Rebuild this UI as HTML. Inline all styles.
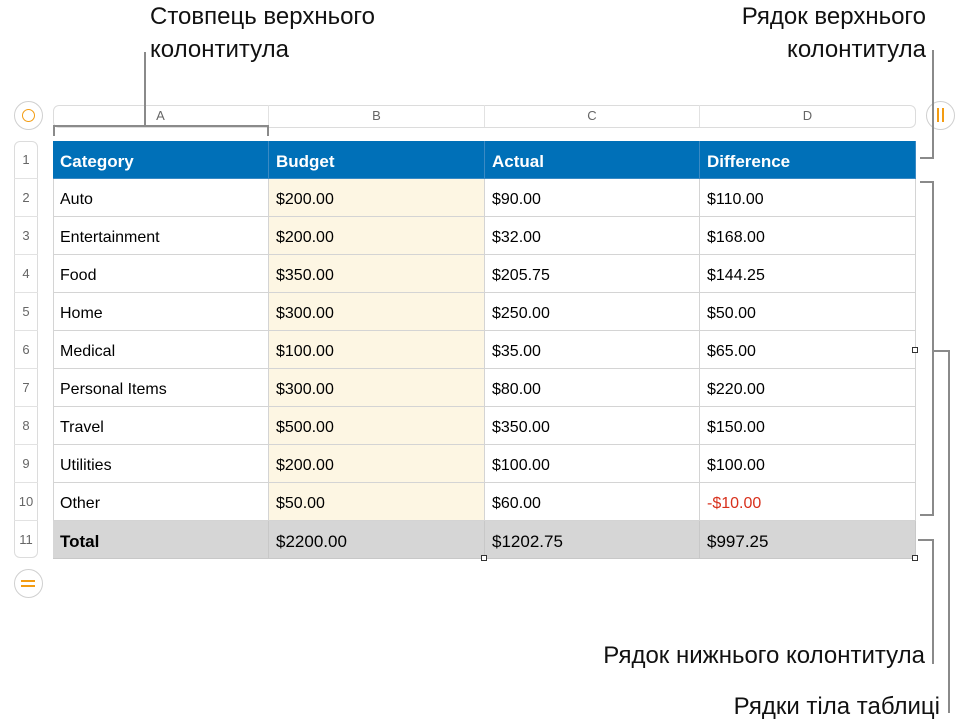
<!DOCTYPE html>
<html><head><meta charset="utf-8"><style>
*{margin:0;padding:0;box-sizing:border-box}
body{width:968px;height:726px;background:#fff;position:relative;overflow:hidden;font-family:"Liberation Sans",Arial,sans-serif;color:#000}
.a{position:absolute}
.lbl{position:absolute;font-size:24px;line-height:24px;color:#111;white-space:nowrap}
.ln{position:absolute;background:#8a8a8a}
.cell{position:absolute;height:38px;line-height:41px;font-size:16px;padding-left:7px;border-right:1px solid #d4d4d4;border-bottom:1px solid #d4d4d4;white-space:nowrap}
.rn{position:absolute;left:14px;width:24px;height:38px;line-height:38px;text-align:center;font-size:13px;color:#666;border-bottom:1px solid #e2e2e2}
.ch{position:absolute;top:105px;height:22px;line-height:22px;text-align:center;font-size:13px;color:#666;border-right:1px solid #e2e2e2}
.h{position:absolute;width:6px;height:6px;border:1px solid #333;background:#fff}
</style></head><body>
<div class="lbl" style="left:150px;top:5px">Стовпець верхнього</div>
<div class="lbl" style="left:150px;top:38px">колонтитула</div>
<div class="lbl" style="right:42px;top:5px">Рядок верхнього</div>
<div class="lbl" style="right:42px;top:38px">колонтитула</div>
<div class="lbl" style="right:43px;top:644px">Рядок нижнього колонтитула</div>
<div class="lbl" style="right:28px;top:695px">Рядки тіла таблиці</div>

<div class="a" style="left:53px;top:105px;width:863px;height:23px;border:1px solid #dcdcdc;border-radius:6px"></div>
<div class="ch" style="left:53px;width:216px">A</div>
<div class="ch" style="left:269px;width:216px">B</div>
<div class="ch" style="left:485px;width:215px">C</div>
<div class="ch" style="left:700px;width:215px;border-right:none">D</div>

<div class="a" style="left:14px;top:101px;width:29px;height:29px;border:1px solid #d0d0d0;border-radius:50%"></div>
<div class="a" style="left:22px;top:109px;width:13px;height:13px;border:1.5px solid #f39c12;border-radius:50%"></div>
<div class="a" style="left:926px;top:101px;width:29px;height:29px;border:1px solid #d0d0d0;border-radius:50%;background:#fff"></div>
<div class="a" style="left:937px;top:108px;width:2px;height:14px;background:#f39c12"></div>
<div class="a" style="left:942px;top:108px;width:2px;height:14px;background:#f39c12"></div>
<div class="a" style="left:14px;top:569px;width:29px;height:29px;border:1px solid #d0d0d0;border-radius:50%"></div>
<div class="a" style="left:21px;top:580px;width:14px;height:1.5px;background:#f39c12"></div>
<div class="a" style="left:21px;top:585px;width:14px;height:1.5px;background:#f39c12"></div>

<div class="a" style="left:14px;top:141px;width:24px;height:417px;border:1px solid #dcdcdc;border-radius:6px"></div>
<div class="rn" style="top:141px">1</div><div class="rn" style="top:179px">2</div><div class="rn" style="top:217px">3</div><div class="rn" style="top:255px">4</div><div class="rn" style="top:293px">5</div><div class="rn" style="top:331px">6</div><div class="rn" style="top:369px">7</div><div class="rn" style="top:407px">8</div><div class="rn" style="top:445px">9</div><div class="rn" style="top:483px">10</div><div class="rn" style="top:521px;border-bottom:none">11</div>

<div class="a" style="left:53px;top:141px;width:863px;height:418px;border-left:1px solid #d4d4d4;border-top:1px solid #d4d4d4"></div>
<div class="a" style="left:269px;top:179px;width:216px;height:342px;background:#fdf6e3"></div>
<div class="a" style="left:53px;top:141px;width:863px;height:38px;background:#0070b8"></div>
<div class="a" style="left:53px;top:521px;width:863px;height:38px;background:#d6d6d6"></div>
<div id="t"></div>
<script>
var d=[["Category","Budget","Actual","Difference"],["Auto","$200.00","$90.00","$110.00"],["Entertainment","$200.00","$32.00","$168.00"],["Food","$350.00","$205.75","$144.25"],["Home","$300.00","$250.00","$50.00"],["Medical","$100.00","$35.00","$65.00"],["Personal Items","$300.00","$80.00","$220.00"],["Travel","$500.00","$350.00","$150.00"],["Utilities","$200.00","$100.00","$100.00"],["Other","$50.00","$60.00","-$10.00"],["Total","$2200.00","$1202.75","$997.25"]];
var xs=[53,269,485,700,916],h="";
for(var r=0;r<11;r++)for(var c=0;c<4;c++){var st="left:"+xs[c]+"px;top:"+(141+38*r)+"px;width:"+(xs[c+1]-xs[c])+"px;";
if(r==0)st+="color:#fff;font-weight:bold;font-size:17px;border-color:#3a8ac4;";
if(r==10)st+="border-color:#c8c8c8;"+(c==0?"font-weight:bold;font-size:17px;":"font-size:17px;");
if(r==9&&c==3)st+="color:#d8301c;";
h+='<div class="cell" style="'+st+'">'+d[r][c]+'</div>';}
document.getElementById("t").innerHTML=h;
</script>

<div class="h" style="left:912px;top:347px"></div>
<div class="h" style="left:481px;top:555px"></div>
<div class="h" style="left:912px;top:555px"></div>

<div class="ln" style="left:144px;top:52px;width:2px;height:75px"></div>
<div class="ln" style="left:53px;top:125px;width:216px;height:2px"></div>
<div class="ln" style="left:53px;top:125px;width:2px;height:11px"></div>
<div class="ln" style="left:267px;top:125px;width:2px;height:11px"></div>

<div class="ln" style="left:932px;top:50px;width:2px;height:109px"></div>
<div class="ln" style="left:920px;top:157px;width:14px;height:2px"></div>

<div class="ln" style="left:932px;top:181px;width:2px;height:335px"></div>
<div class="ln" style="left:920px;top:181px;width:14px;height:2px"></div>
<div class="ln" style="left:920px;top:514px;width:14px;height:2px"></div>
<div class="ln" style="left:932px;top:350px;width:18px;height:2px"></div>
<div class="ln" style="left:948px;top:350px;width:2px;height:363px"></div>

<div class="ln" style="left:918px;top:539px;width:16px;height:2px"></div>
<div class="ln" style="left:932px;top:539px;width:2px;height:125px"></div>
</body></html>
